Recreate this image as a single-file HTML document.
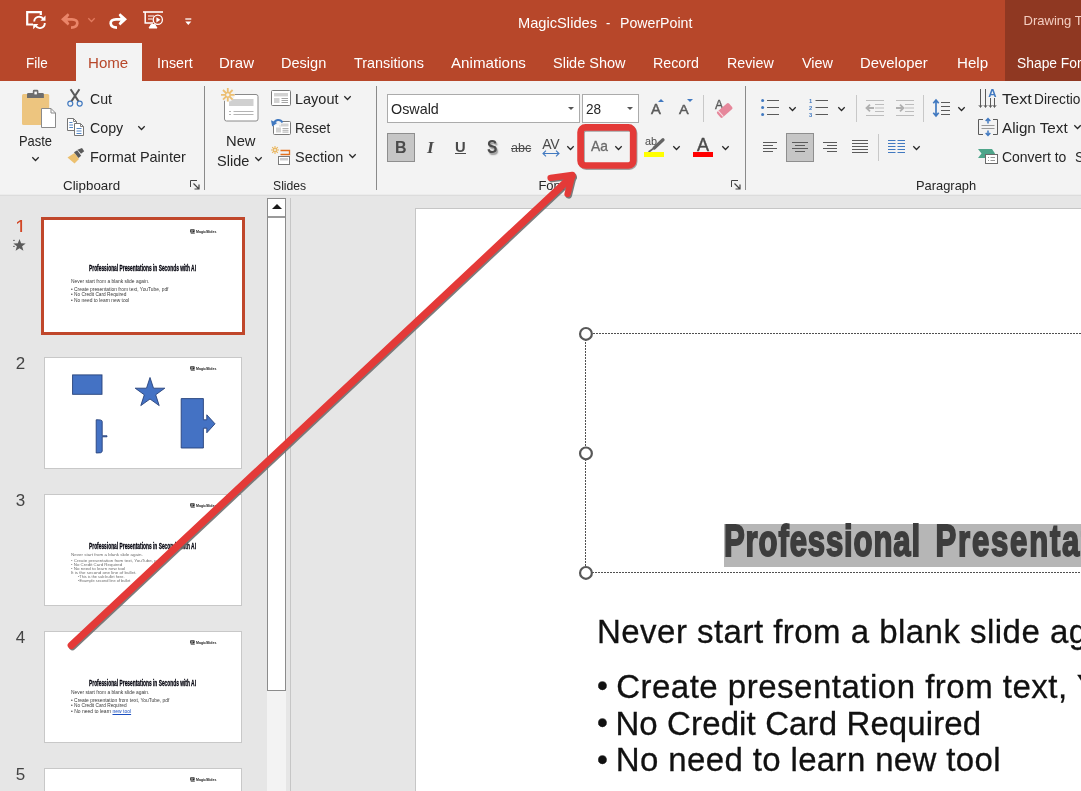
<!DOCTYPE html>
<html>
<head>
<meta charset="utf-8">
<title>MagicSlides - PowerPoint</title>
<style>
html,body{margin:0;padding:0;}
body{width:1081px;height:791px;overflow:hidden;position:relative;background:#e6e6e6;font-family:"Liberation Sans",sans-serif;color:#262626;}
#root{position:absolute;left:0;top:0;width:1081px;height:791px;overflow:hidden;will-change:transform;}
.abs{position:absolute;}
.t{position:absolute;white-space:nowrap;line-height:1;}
#titlebar{left:0;top:0;width:1081px;height:81px;background:#b7472a;}
#ctx{left:1005px;top:0;width:76px;height:81px;background:#8f3822;}
#hometab{left:76px;top:43px;width:66px;height:38px;background:#f3f3f3;}
#ribbon{left:0;top:81px;width:1081px;height:113px;background:#f3f3f3;}
#ribbonline{left:0;top:194px;width:1081px;height:2px;background:linear-gradient(#ececec 0,#ececec 50%,#dcdcdc 50%,#dcdcdc 100%);}
.tab{color:#fff;font-size:15px;top:55px;}
.rt{font-size:15px;color:#262626;}
.gl{font-size:13px;color:#262626;top:178px;}
.sep{position:absolute;top:86px;width:1px;height:104px;background:#8a8a8a;}
.ssep{position:absolute;width:1px;background:#c8c8c8;}
svg{position:absolute;overflow:visible;}

.thumb{position:absolute;left:44px;width:196px;height:110px;background:#fff;border:1px solid #c8c8c8;overflow:hidden;}
.num{position:absolute;font-size:18px;color:#444;line-height:1;left:15px;}
.bl{font-size:31px;position:relative;top:-1.6px;margin-right:-1.9px;}
.mb{-webkit-text-stroke:0.3px #111;}
.tt{position:absolute;white-space:nowrap;line-height:1;transform-origin:0 0;color:#1a1a2a;}
</style>
</head>
<body>
<div id="root">
<div id="titlebar" class="abs"></div><div id="ctx" class="abs"></div><div id="hometab" class="abs"></div>
<div class="t " style="left:517.5px;top:15.0px;font-size:15px;transform-origin:0 0;transform:scaleX(0.9771);color:#fff;">MagicSlides</div>
<div class="t " style="left:606.4px;top:15.0px;font-size:15px;transform-origin:0 0;transform:scaleX(0.8557);color:#fff;">-</div>
<div class="t " style="left:619.5px;top:15.0px;font-size:15px;transform-origin:0 0;transform:scaleX(0.9436);color:#fff;">PowerPoint</div>
<div class="t " style="left:1023.6px;top:14.09px;font-size:13px;color:#f3cdc0;">Drawing Tools</div>
<div class="t tab" style="left:25.6px;top:54.8px;transform-origin:0 0;transform:scaleX(0.8986);">File</div>
<div class="t tab" style="left:156.5px;top:54.8px;transform-origin:0 0;transform:scaleX(0.9493);">Insert</div>
<div class="t tab" style="left:219.1px;top:54.8px;transform-origin:0 0;transform:scaleX(0.9993);">Draw</div>
<div class="t tab" style="left:281.4px;top:54.8px;transform-origin:0 0;transform:scaleX(0.9695);">Design</div>
<div class="t tab" style="left:354.0px;top:54.8px;transform-origin:0 0;transform:scaleX(0.9598);">Transitions</div>
<div class="t tab" style="left:450.9px;top:54.8px;transform-origin:0 0;transform:scaleX(1.0098);">Animations</div>
<div class="t tab" style="left:553.1px;top:54.8px;transform-origin:0 0;transform:scaleX(0.967);">Slide Show</div>
<div class="t tab" style="left:653.3px;top:54.8px;transform-origin:0 0;transform:scaleX(0.9509);">Record</div>
<div class="t tab" style="left:727.2px;top:54.8px;transform-origin:0 0;transform:scaleX(0.9492);">Review</div>
<div class="t tab" style="left:801.5px;top:54.8px;transform-origin:0 0;transform:scaleX(0.9612);">View</div>
<div class="t tab" style="left:860.4px;top:54.8px;transform-origin:0 0;transform:scaleX(0.9883);">Developer</div>
<div class="t tab" style="left:956.5px;top:54.8px;transform-origin:0 0;transform:scaleX(1.0057);">Help</div>
<div class="t tab" style="left:1017.4px;top:54.8px;transform-origin:0 0;transform:scaleX(0.9227);">Shape Format</div>
<div class="t tab" style="left:88.2px;top:54.8px;transform-origin:0 0;transform:scaleX(1.0062);color:#b7472a;">Home</div>
<svg style="left:26px;top:11px" width="20" height="19" viewBox="0 0 20 19">
<path d="M7,13.5 H1.2 V1.2 H14.8 V4" fill="none" stroke="#fff" stroke-width="2.2"/>
<path d="M8.2,10.5 A5,5 0 0 1 17.5,8.2" fill="none" stroke="#fff" stroke-width="1.9"/>
<path d="M18.8,12 A5,5 0 0 1 9.5,14.6" fill="none" stroke="#fff" stroke-width="1.9"/>
<polygon points="19.5,4.5 19.5,9.8 14.4,9.8" fill="#fff"/>
<polygon points="7.2,18.3 7.2,13 12.4,13" fill="#fff"/>
</svg>
<svg style="left:61px;top:13px" width="18" height="15" viewBox="0 0 18 15">
<path d="M3.2,6.3 H11 C18.5,6.3 18,14.5 10,14.6" fill="none" stroke="#ea8569" stroke-width="2.7" stroke-linejoin="round"/>
<polygon points="0,6.3 6.8,0.2 8.4,2 5.6,6.3 8.4,10.6 6.8,12.4" fill="#ea8569"/>
</svg>
<svg style="left:88px;top:18px" width="7" height="4" viewBox="0 0 7 4"><polyline points="0.3,0.3 3.5,3.5 6.7,0.3" fill="none" stroke="#e27a5e" stroke-width="1.3"/></svg>
<svg style="left:109px;top:13px" width="18" height="15" viewBox="0 0 18 15">
<path d="M14.8,6.3 H7 C-0.5,6.3 0,14.5 8,14.6" fill="none" stroke="#fff" stroke-width="2.7" stroke-linejoin="round"/>
<polygon points="18,6.3 11.2,0.2 9.6,2 12.4,6.3 9.6,10.6 11.2,12.4" fill="#fff"/>
</svg>
<svg style="left:143px;top:11px" width="20" height="18" viewBox="0 0 20 18">
<path d="M0,1 H20" stroke="#fff" stroke-width="1.6"/>
<path d="M2.2,1 V12 H10" fill="none" stroke="#fff" stroke-width="1.5"/>
<path d="M5,5 H11 M5,8 H9.5" stroke="#fff" stroke-width="1.2"/>
<circle cx="14.8" cy="8.8" r="4.6" fill="#b7472a" stroke="#fff" stroke-width="1.3"/>
<polygon points="13.4,6.2 13.4,11.4 17.4,8.8" fill="#fff"/>
<path d="M8.5,13 L6,17 H14 L11.5,13" fill="#fff" stroke="#fff" stroke-width="1"/>
</svg>
<svg style="left:185px;top:18px" width="7" height="8" viewBox="0 0 7 8"><path d="M0.3,1 H6.3" stroke="#fff" stroke-width="1.3"/><polygon points="0.3,3.6 6.3,3.6 3.3,7" fill="#fff"/></svg>
<div id="ribbon" class="abs"></div><div id="ribbonline" class="abs"></div>
<div class="sep" style="left:204px"></div>
<div class="sep" style="left:376px"></div>
<div class="sep" style="left:745px"></div>
<div class="ssep" style="left:703px;top:95px;height:27px"></div>
<div class="ssep" style="left:856px;top:95px;height:27px"></div>
<div class="ssep" style="left:923px;top:95px;height:27px"></div>
<div class="ssep" style="left:878px;top:134px;height:27px"></div>
<svg style="left:22px;top:89px" width="35" height="39" viewBox="0 0 35 39">
<rect x="0" y="5" width="27.2" height="31" rx="1.5" fill="#edc57f"/>
<path d="M5,9 V5.2 Q5,3.9 6.3,3.9 H10.8 V2.2 Q10.8,0.8 12.2,0.8 H15 Q16.4,0.8 16.4,2.2 V3.9 H20.6 Q21.9,3.9 21.9,5.2 V9 Z" fill="#6e6e6e"/>
<rect x="12.4" y="2.6" width="2.5" height="2.8" fill="#fafafa"/>
<path d="M19.5,19.5 H29 L33.5,24 V38.5 H19.5 Z" fill="#fff" stroke="#8a8a8a" stroke-width="1"/>
<path d="M29,19.5 V24 H33.5" fill="none" stroke="#8a8a8a" stroke-width="1"/>
</svg>
<div class="t rt" style="left:19.4px;top:132.9px;transform-origin:0 0;transform:scaleX(0.8611);">Paste</div>
<svg style="left:32px;top:157px" width="7" height="4" viewBox="0 0 7 4"><polyline points="0.3,0.3 3.5,3.5 6.7,0.3" fill="none" stroke="#262626" stroke-width="1.25"/></svg>
<svg style="left:67px;top:89px" width="16" height="18" viewBox="0 0 16 18">
<path d="M3.6,0.3 L11.6,12.4 M12.4,0.3 L4.4,12.4" stroke="#595959" stroke-width="2" fill="none"/>
<circle cx="3.3" cy="14.6" r="2.5" fill="none" stroke="#4179c0" stroke-width="1.2"/>
<circle cx="12.7" cy="14.6" r="2.5" fill="none" stroke="#4179c0" stroke-width="1.2"/>
</svg>
<div class="t rt" style="left:89.9px;top:91.0px;transform-origin:0 0;transform:scaleX(0.9432);">Cut</div>
<svg style="left:67px;top:118px" width="17" height="18" viewBox="0 0 17 18">
<path d="M0.5,0.5 H6.5 L9.5,3.5 V12.5 H0.5 Z" fill="#fff" stroke="#757575" stroke-width="1"/>
<path d="M6.5,0.5 V3.5 H9.5" fill="none" stroke="#757575" stroke-width="0.9"/>
<path d="M2.3,4.5 H5.5 M2.3,7 H6 M2.3,9.5 H6" stroke="#4179c0" stroke-width="0.9"/>
<path d="M7.5,5.5 H13.5 L16.5,8.5 V17.5 H7.5 Z" fill="#fff" stroke="#757575" stroke-width="1"/>
<path d="M13.5,5.5 V8.5 H16.5" fill="none" stroke="#757575" stroke-width="0.9"/>
<path d="M9.5,10.5 H14.5 M9.5,13 H14.5 M9.5,15.5 H14.5" stroke="#4179c0" stroke-width="0.9"/>
</svg>
<div class="t rt" style="left:90.3px;top:120.1px;transform-origin:0 0;transform:scaleX(0.9479);">Copy</div>
<svg style="left:138px;top:126px" width="7" height="4" viewBox="0 0 7 4"><polyline points="0.3,0.3 3.5,3.5 6.7,0.3" fill="none" stroke="#262626" stroke-width="1.25"/></svg>
<svg style="left:67px;top:148px" width="18" height="16" viewBox="0 0 18 16">
<polygon points="0.5,9.5 7.5,5 12,11 7.5,15.5" fill="#ecc06f"/>
<polygon points="7,4.2 10.2,2.2 14.2,7.8 11.5,10" fill="#5a5a5a"/>
<polygon points="10.5,1.8 15,0 17.2,3.2 14,5.8" fill="#5a5a5a"/>
</svg>
<div class="t rt" style="left:89.9px;top:148.9px;transform-origin:0 0;transform:scaleX(0.9655);">Format Painter</div>
<div class="t gl" style="left:63.3px;top:178.69px;transform-origin:0 0;transform:scaleX(1.0262);">Clipboard</div>
<svg style="left:190px;top:180px" width="10" height="10" viewBox="0 0 10 10"><path d="M0.5,7 V0.5 H7" fill="none" stroke="#444" stroke-width="1"/><path d="M3.5,3.5 L9,9 M9,4.5 V9 H4.5" fill="none" stroke="#444" stroke-width="1.2"/></svg>
<svg style="left:221px;top:88px" width="38" height="34" viewBox="0 0 38 34">
<rect x="3.5" y="6.5" width="33.5" height="26.5" rx="2" fill="#fff" stroke="#8a8a8a" stroke-width="1"/>
<rect x="8" y="11" width="24.5" height="7" fill="#d0d0d0"/>
<path d="M8,23.5 H10 M12.5,23.5 H32.5 M8,26.5 H10 M12.5,26.5 H32.5" stroke="#b4b4b4" stroke-width="1"/>
<circle cx="6.8" cy="6.8" r="7" fill="#f3f3f3"/>
<path d="M6.8,0 V13.6 M0,6.8 H13.6 M2,2 L11.6,11.6 M11.6,2 L2,11.6" stroke="#ecbf72" stroke-width="1.8"/>
<circle cx="6.8" cy="6.8" r="2.3" fill="#f3f3f3" stroke="#ecbf72" stroke-width="1.3"/>
</svg>
<div class="t rt" style="left:226.4px;top:132.9px;transform-origin:0 0;transform:scaleX(0.9842);">New</div>
<div class="t rt" style="left:217.2px;top:152.8px;transform-origin:0 0;transform:scaleX(0.9678);">Slide</div>
<svg style="left:255px;top:157px" width="7" height="4" viewBox="0 0 7 4"><polyline points="0.3,0.3 3.5,3.5 6.7,0.3" fill="none" stroke="#262626" stroke-width="1.25"/></svg>
<svg style="left:271px;top:90px" width="20" height="16" viewBox="0 0 20 16">
<rect x="0.5" y="0.5" width="19" height="15" rx="1" fill="#fff" stroke="#7a7a7a" stroke-width="1"/>
<rect x="3" y="3" width="14" height="3.4" fill="#d2d2d2"/>
<rect x="3" y="8" width="5.5" height="5" fill="#d2d2d2"/>
<path d="M10.5,8.5 H17 M10.5,10.5 H17 M10.5,12.5 H17" stroke="#9a9a9a" stroke-width="0.9"/>
</svg>
<div class="t rt" style="left:295.4px;top:91.0px;transform-origin:0 0;transform:scaleX(0.9651);">Layout</div>
<svg style="left:344px;top:95.5px" width="7" height="4" viewBox="0 0 7 4"><polyline points="0.3,0.3 3.5,3.5 6.7,0.3" fill="none" stroke="#262626" stroke-width="1.25"/></svg>
<svg style="left:271px;top:118px" width="20" height="17" viewBox="0 0 20 17">
<rect x="2.5" y="3.5" width="17" height="13" rx="1" fill="#fff" stroke="#7a7a7a" stroke-width="1"/>
<rect x="8" y="5.5" width="9.5" height="3" fill="#d2d2d2"/>
<rect x="5" y="9.5" width="5" height="5" fill="#d2d2d2"/>
<path d="M11.5,10.5 H17.5 M11.5,12.3 H17.5 M11.5,14.1 H17.5" stroke="#9a9a9a" stroke-width="0.8"/>
<rect x="0" y="0" width="10" height="7.5" fill="#f3f3f3"/>
<path d="M3,5.8 C3.5,1.2 9.5,0.8 11.5,4.5" fill="none" stroke="#4179c0" stroke-width="1.9"/>
<polygon points="0,2.2 6.2,5 1.2,8.6" fill="#4179c0"/>
</svg>
<div class="t rt" style="left:295.4px;top:120.1px;transform-origin:0 0;transform:scaleX(0.8966);">Reset</div>
<svg style="left:271px;top:146px" width="20" height="19" viewBox="0 0 20 19">
<path d="M9.5,4.5 H18.5 V8.5 H9.5" fill="none" stroke="#e2711d" stroke-width="1.3"/>
<rect x="7.5" y="10.5" width="11" height="8" fill="#fff" stroke="#7a7a7a" stroke-width="1"/>
<rect x="9" y="12" width="8" height="2.5" fill="#cdcdcd"/>
<path d="M4,0 V8 M0,4 H8 M1.2,1.2 L6.8,6.8 M6.8,1.2 L1.2,6.8" stroke="#e9b45a" stroke-width="1.1"/>
<circle cx="4" cy="4" r="1.5" fill="#f3f3f3" stroke="#e9b45a" stroke-width="0.9"/>
</svg>
<div class="t rt" style="left:295.4px;top:148.9px;transform-origin:0 0;transform:scaleX(0.9655);">Section</div>
<svg style="left:349px;top:153.5px" width="7" height="4" viewBox="0 0 7 4"><polyline points="0.3,0.3 3.5,3.5 6.7,0.3" fill="none" stroke="#262626" stroke-width="1.25"/></svg>
<div class="t gl" style="left:273.2px;top:178.69px;transform-origin:0 0;transform:scaleX(0.9372);">Slides</div>
<div class="abs" style="left:387px;top:94px;width:191px;height:27px;background:#fff;border:1px solid #ababab;box-sizing:content-box"></div>
<div class="t rt" style="left:390.6px;top:100.7px;transform-origin:0 0;transform:scaleX(0.9555);">Oswald</div>
<svg style="left:568px;top:107px" width="6" height="3" viewBox="0 0 6 3"><polygon points="0,0 6,0 3.0,3" fill="#555"/></svg>
<div class="abs" style="left:582px;top:94px;width:55px;height:27px;background:#fff;border:1px solid #ababab;"></div>
<div class="t rt" style="left:585.6px;top:100.7px;transform-origin:0 0;transform:scaleX(0.9069);">28</div>
<svg style="left:627px;top:107px" width="6" height="3" viewBox="0 0 6 3"><polygon points="0,0 6,0 3.0,3" fill="#555"/></svg>
<div class="t " style="left:650.6px;top:101.3px;font-size:15px;transform-origin:0 0;transform:scaleX(0.9851);color:#5a5a5a;-webkit-text-stroke:0.45px #5a5a5a;">A</div>
<svg style="left:658px;top:99px" width="6" height="3" viewBox="0 0 6 3"><polygon points="0,3 6,3 3,0" fill="#4179c0"/></svg>
<div class="t " style="left:679.2px;top:103.17px;font-size:13.5px;transform-origin:0 0;transform:scaleX(1.0724);color:#5a5a5a;-webkit-text-stroke:0.45px #5a5a5a;">A</div>
<svg style="left:687px;top:99px" width="6" height="3" viewBox="0 0 6 3"><polygon points="0,0 6,0 3,3" fill="#4179c0"/></svg>
<div class="t " style="left:714.6px;top:97.77px;font-size:13.5px;transform-origin:0 0;transform:scaleX(0.9066);color:#5a5a5a;-webkit-text-stroke:0.35px #5a5a5a;">A</div>
<svg style="left:0px;top:0px" width="1081" height="200" viewBox="0 0 1081 200"><g transform="translate(724.7,110.4) rotate(-41)"><rect x="-7.8" y="-3.9" width="15.6" height="7.8" rx="1.6" fill="#e6879b"/><rect x="-5.6" y="-3.9" width="1" height="7.8" fill="#f6dfe4"/></g></svg>
<div class="abs" style="left:387px;top:133px;width:26px;height:27px;background:#c6c6c6;border:1px solid #8e8e8e;"></div>
<div class="t " style="left:395px;top:140px;font-size:16px;font-weight:bold;color:#4a4a4a;">B</div>
<div class="t " style="left:427px;top:138.6px;font-family:'Liberation Serif',serif;font-style:italic;font-weight:bold;font-size:17.5px;color:#4a4a4a;">I</div>
<div class="t " style="left:455.2px;top:139.3px;font-size:15px;font-weight:bold;transform-origin:0 0;transform:scaleX(0.9815);color:#4a4a4a;">U</div>
<div class="abs" style="left:455px;top:153.2px;width:11px;height:1.3px;background:#4a4a4a;"></div>
<div class="t " style="left:486.6px;top:138px;font-size:18px;font-weight:bold;color:#4a4a4a;text-shadow:1.5px 1.5px 1.5px #999;transform-origin:0 0;transform:scaleX(0.86);">S</div>
<div class="t " style="left:511px;top:142px;font-size:12.5px;color:#4a4a4a;text-decoration:line-through;">abc</div>
<div class="t " style="left:542.3px;top:136.8px;font-size:14px;color:#4a4a4a;letter-spacing:-0.4px;">AV</div>
<svg style="left:542px;top:150px" width="18" height="7" viewBox="0 0 18 7"><path d="M1,3.5 H17 M4,0.7 L1,3.5 L4,6.3 M14,0.7 L17,3.5 L14,6.3" fill="none" stroke="#4179c0" stroke-width="1.1"/></svg>
<svg style="left:567px;top:145.5px" width="7" height="4" viewBox="0 0 7 4"><polyline points="0.3,0.3 3.5,3.5 6.7,0.3" fill="none" stroke="#262626" stroke-width="1.25"/></svg>
<div class="t " style="left:590.6px;top:139.42px;font-size:14.5px;transform-origin:0 0;transform:scaleX(0.9514);color:#6a6a6a;-webkit-text-stroke:0.3px #6a6a6a;">Aa</div>
<svg style="left:615px;top:145.5px" width="7" height="4" viewBox="0 0 7 4"><polyline points="0.3,0.3 3.5,3.5 6.7,0.3" fill="none" stroke="#262626" stroke-width="1.25"/></svg>
<div class="t " style="left:644.5px;top:135.86px;font-size:10.8px;transform-origin:0 0;transform:scaleX(1.0093);color:#4a4a4a;">ab</div>
<svg style="left:0px;top:0px" width="1081" height="200" viewBox="0 0 1081 200"><path d="M663,139.8 L654.2,148" stroke="#646464" stroke-width="3.3" stroke-linecap="round" fill="none"/><path d="M654.6,147.6 L648.6,152" stroke="#646464" stroke-width="1.7" fill="none"/></svg>
<div class="abs" style="left:644px;top:152px;width:20px;height:5px;background:#ffff00;"></div>
<svg style="left:673px;top:145.5px" width="7" height="4" viewBox="0 0 7 4"><polyline points="0.3,0.3 3.5,3.5 6.7,0.3" fill="none" stroke="#262626" stroke-width="1.25"/></svg>
<div class="t " style="left:696.8px;top:136.58px;font-size:17.5px;transform-origin:0 0;transform:scaleX(1.032);color:#4a4a4a;-webkit-text-stroke:0.4px #4a4a4a;">A</div>
<div class="abs" style="left:693px;top:152px;width:20px;height:5px;background:#ff0000;"></div>
<svg style="left:722px;top:145.5px" width="7" height="4" viewBox="0 0 7 4"><polyline points="0.3,0.3 3.5,3.5 6.7,0.3" fill="none" stroke="#262626" stroke-width="1.25"/></svg>
<div class="t gl" style="left:538.4px;top:178.69px;">Font</div>
<svg style="left:731px;top:180px" width="10" height="10" viewBox="0 0 10 10"><path d="M0.5,7 V0.5 H7" fill="none" stroke="#444" stroke-width="1"/><path d="M3.5,3.5 L9,9 M9,4.5 V9 H4.5" fill="none" stroke="#444" stroke-width="1.2"/></svg>
<svg style="left:761px;top:99px" width="18" height="18" viewBox="0 0 18 18">
<circle cx="1.6" cy="1.5" r="1.5" fill="#4179c0"/><circle cx="1.6" cy="8.5" r="1.5" fill="#4179c0"/><circle cx="1.6" cy="15.5" r="1.5" fill="#4179c0"/>
<path d="M6,1.5 H18 M6,8.5 H18 M6,15.5 H18" stroke="#5a5a5a" stroke-width="1"/></svg>
<svg style="left:789px;top:106.5px" width="7" height="4" viewBox="0 0 7 4"><polyline points="0.3,0.3 3.5,3.5 6.7,0.3" fill="none" stroke="#262626" stroke-width="1.25"/></svg>
<svg style="left:809px;top:98px" width="19" height="19" viewBox="0 0 19 19">
<text x="0" y="5.2" font-size="5.8" font-weight="bold" fill="#4179c0" font-family="Liberation Sans, sans-serif">1</text>
<text x="0" y="12.2" font-size="5.8" font-weight="bold" fill="#4179c0" font-family="Liberation Sans, sans-serif">2</text>
<text x="0" y="19.2" font-size="5.8" font-weight="bold" fill="#4179c0" font-family="Liberation Sans, sans-serif">3</text>
<path d="M6.5,2.5 H19 M6.5,9.5 H19 M6.5,16.5 H19" stroke="#5a5a5a" stroke-width="1"/></svg>
<svg style="left:838px;top:106.5px" width="7" height="4" viewBox="0 0 7 4"><polyline points="0.3,0.3 3.5,3.5 6.7,0.3" fill="none" stroke="#262626" stroke-width="1.25"/></svg>
<svg style="left:866px;top:99px" width="18" height="17" viewBox="0 0 18 17">
<path d="M0,1.5 H18 M9,5.5 H18 M9,9 H18 M9,12.5 H18 M0,16.5 H18" stroke="#bdbdbd" stroke-width="1"/>
<path d="M0.5,9 H8 M4,5.6 L0.5,9 L4,12.4" fill="none" stroke="#b0b0b0" stroke-width="1.8"/></svg>
<svg style="left:896px;top:99px" width="18" height="17" viewBox="0 0 18 17">
<path d="M0,1.5 H18 M9,5.5 H18 M9,9 H18 M9,12.5 H18 M0,16.5 H18" stroke="#bdbdbd" stroke-width="1"/>
<path d="M0,9 H7.5 M4,5.6 L7.5,9 L4,12.4" fill="none" stroke="#b0b0b0" stroke-width="1.8"/></svg>
<svg style="left:933px;top:99px" width="17" height="18" viewBox="0 0 17 18">
<path d="M3,1.5 V16.5 M0.3,4.2 L3,1 L5.7,4.2 M0.3,13.8 L3,17 L5.7,13.8" fill="none" stroke="#4179c0" stroke-width="1.7"/>
<path d="M8,3.5 H17 M8,7.5 H17 M8,11.5 H17 M8,15.5 H17" stroke="#5a5a5a" stroke-width="1"/></svg>
<svg style="left:958px;top:106.5px" width="7" height="4" viewBox="0 0 7 4"><polyline points="0.3,0.3 3.5,3.5 6.7,0.3" fill="none" stroke="#262626" stroke-width="1.25"/></svg>
<svg style="left:763px;top:142px" width="14" height="10" viewBox="0 0 14 10"><path d="M0,0.5 H14 M0,3.5 H10 M0,6.5 H14 M0,9.5 H10" stroke="#5a5a5a" stroke-width="1"/></svg>
<div class="abs" style="left:786px;top:133px;width:26px;height:27px;background:#c6c6c6;border:1px solid #8e8e8e;"></div>
<svg style="left:792px;top:142px" width="16" height="10" viewBox="0 0 16 10"><path d="M0,0.5 H16 M3,3.5 H13 M0,6.5 H16 M3,9.5 H13" stroke="#5a5a5a" stroke-width="1"/></svg>
<svg style="left:823px;top:142px" width="14" height="10" viewBox="0 0 14 10"><path d="M0,0.5 H14 M4,3.5 H14 M0,6.5 H14 M4,9.5 H14" stroke="#5a5a5a" stroke-width="1"/></svg>
<svg style="left:852px;top:140px" width="16" height="14" viewBox="0 0 16 14"><path d="M0,0.5 H16 M0,3.5 H16 M0,6.5 H16 M0,9.5 H16 M0,12.5 H16" stroke="#5a5a5a" stroke-width="1"/></svg>
<svg style="left:888px;top:140px" width="17" height="14" viewBox="0 0 17 14"><path d="M0,0.5 H7.5 M0,3.5 H7.5 M0,6.5 H7.5 M0,9.5 H7.5 M0,12.5 H7.5 M9.5,0.5 H17 M9.5,3.5 H17 M9.5,6.5 H17 M9.5,9.5 H17 M9.5,12.5 H17" stroke="#4179c0" stroke-width="1"/></svg>
<svg style="left:913px;top:145.5px" width="7" height="4" viewBox="0 0 7 4"><polyline points="0.3,0.3 3.5,3.5 6.7,0.3" fill="none" stroke="#262626" stroke-width="1.25"/></svg>
<div class="t gl" style="left:915.6px;top:178.69px;transform-origin:0 0;transform:scaleX(0.99);">Paragraph</div>
<svg style="left:979px;top:88px" width="19" height="21" viewBox="0 0 19 21">
<path d="M1.5,1 V19 M6.5,1 V19 M11.5,10 V19 M15.5,10 V19" stroke="#5a5a5a" stroke-width="1"/>
<path d="M-0.2,17 L1.5,19.5 L3.2,17 M4.8,17 L6.5,19.5 L8.2,17 M9.8,17 L11.5,19.5 L13.2,17 M13.8,17 L15.5,19.5 L17.2,17" fill="none" stroke="#5a5a5a" stroke-width="0.9"/>
<text x="9.3" y="8.5" font-size="11.5" font-weight="bold" fill="#4179c0" font-family="Liberation Sans, sans-serif">A</text></svg>
<div class="t rt" style="left:1001.9px;top:90.8px;transform-origin:0 0;transform:scaleX(1.0863);">Text</div>
<div class="t rt" style="left:1034.4px;top:90.8px;transform-origin:0 0;transform:scaleX(0.9124);">Direction</div>
<svg style="left:978px;top:118px" width="20" height="18" viewBox="0 0 20 18">
<path d="M5,1.5 H0.5 V16.5 H5 M15,1.5 H19.5 V16.5 H15" fill="none" stroke="#5a5a5a" stroke-width="1"/>
<path d="M3.5,7.5 H16.5 M3.5,10.5 H16.5" stroke="#9a9a9a" stroke-width="1"/>
<path d="M10,0.8 V5.5 M7.7,3 L10,0.6 L12.3,3 M10,12.5 V17.2 M7.7,15 L10,17.4 L12.3,15" fill="none" stroke="#4179c0" stroke-width="1.5"/></svg>
<div class="t rt" style="left:1001.9px;top:120.1px;transform-origin:0 0;transform:scaleX(1.0139);">Align Text</div>
<svg style="left:1073.5px;top:124.5px" width="7" height="4" viewBox="0 0 7 4"><polyline points="0.3,0.3 3.5,3.5 6.7,0.3" fill="none" stroke="#262626" stroke-width="1.25"/></svg>
<svg style="left:978px;top:149px" width="20" height="15" viewBox="0 0 20 15">
<polygon points="0,0 14,0 17,4.5 14,9 0,9 3.5,4.5" fill="#4ea58a"/>
<rect x="7.5" y="5.5" width="12" height="9" fill="#fff" stroke="#6b6b6b" stroke-width="1"/>
<path d="M10,8.5 H11 M12.5,8.5 H17 M10,11.5 H11 M12.5,11.5 H17" stroke="#8a8a8a" stroke-width="0.9"/></svg>
<div class="t rt" style="left:1002.0px;top:148.9px;transform-origin:0 0;transform:scaleX(0.9303);">Convert to</div>
<div class="t rt" style="left:1075.2px;top:148.9px;transform-origin:0 0;transform:scaleX(0.9303);">SmartArt</div>
<div class="abs" style="left:290px;top:198px;width:1px;height:600px;background:#c6c6c6;"></div>
<div class="abs" style="left:267px;top:198px;width:17px;height:491px;background:#fff;border:1px solid #8c8c8c;"></div>
<div class="abs" style="left:268px;top:216px;width:17px;height:2px;background:#9a9a9a;"></div>
<div class="abs" style="left:267px;top:691px;width:19px;height:100px;background:#f3f3f3;"></div>
<svg style="left:272px;top:204px" width="10" height="5" viewBox="0 0 10 5"><polygon points="0,5 10,5 5,0" fill="#1a1a1a"/></svg>
<div class="abs" style="left:15px;top:216.7px;width:20px;height:15.4px;overflow:hidden;"><div class="t" style="left:0;top:0;font-size:20.8px;color:#d24726;">1</div></div>
<svg style="left:12.9px;top:239px" width="13" height="12" viewBox="0 0 13 12"><polygon points="6.5,0 8.1,4.3 12.7,4.5 9.1,7.3 10.4,11.8 6.5,9.2 2.6,11.8 3.9,7.3 0.3,4.5 4.9,4.3" fill="#5a5a5a"/><path d="M0,1.4 H1.9 M0,7.4 H1.9" stroke="#555" stroke-width="0.8"/></svg>
<div class="t " style="left:15.8px;top:354.81px;font-size:17px;color:#444;">2</div>
<div class="t " style="left:15.8px;top:491.81px;font-size:17px;color:#444;">3</div>
<div class="t " style="left:15.8px;top:628.81px;font-size:17px;color:#444;">4</div>
<div class="t " style="left:15.8px;top:765.81px;font-size:17px;color:#444;">5</div>
<div class="abs" style="left:41px;top:217px;width:198px;height:112px;border:3px solid #c0472b;background:#fff;"></div>
<svg style="left:189.7px;top:229.3px" width="5" height="5" viewBox="0 0 5 5"><rect x="0.2" y="0.2" width="4.4" height="3.4" rx="0.6" fill="#222"/><path d="M1,1.3 H3.8 M1,2.3 H3" stroke="#fff" stroke-width="0.5"/><path d="M0.8,4.3 H4.8" stroke="#222" stroke-width="0.7"/></svg>
<div class="t " style="left:196.0px;top:229.9px;font-size:3.9px;font-weight:bold;transform-origin:0 0;transform:scaleX(0.905);color:#222;">MagicSlides</div>
<div class="t " style="left:89.4px;top:263.99px;font-size:8.4px;font-weight:bold;transform-origin:0 0;transform:scaleX(0.58);color:#05050f;-webkit-text-stroke:0.3px #05050f;">Professional Presentations in Seconds with AI</div>
<div class="t " style="left:71.1px;top:280.07px;font-size:4.76px;transform-origin:0 0;transform:scaleX(1.0288);color:#3a3a3a;">Never start from a blank slide again.</div>
<div class="t " style="left:71.1px;top:287.77px;font-size:4.76px;transform-origin:0 0;transform:scaleX(1.0265);color:#3a3a3a;">• Create presentation from text, YouTube, pdf</div>
<div class="t " style="left:71.1px;top:292.97px;font-size:4.76px;transform-origin:0 0;transform:scaleX(1.0021);color:#3a3a3a;">• No Credit Card Required</div>
<div class="t " style="left:71.1px;top:298.57px;font-size:4.76px;transform-origin:0 0;transform:scaleX(1.022);color:#3a3a3a;">• No need to learn new tool</div>
<div class="thumb" style="top:357px;"><svg style="left:0;top:0" width="197" height="110" viewBox="0 0 197 110"><g fill="#4472c4" stroke="#27427a" stroke-width="0.9" stroke-linejoin="miter"><rect x="27.6" y="16.9" width="29.4" height="19.4"/><polygon points="105,19.5 108.5,30.2 119.8,30.2 110.7,36.8 114.2,47.6 105,41 95.8,47.6 99.3,36.8 90.2,30.2 101.5,30.2"/><path d="M136.2,40.6 H158.4 V61.8 H161.8 V56.8 L170,65.8 L161.8,74.8 V70.2 H158.4 V90 H136.2 Z"/><path d="M51.2,61.8 Q57.2,61.5 57.2,63.5 V77.8 H62 V78.8 H57.2 V93.5 Q57.2,95.2 51.2,95 Z"/></g></svg></div>
<svg style="left:189.7px;top:366.2px" width="5" height="5" viewBox="0 0 5 5"><rect x="0.2" y="0.2" width="4.4" height="3.4" rx="0.6" fill="#222"/><path d="M1,1.3 H3.8 M1,2.3 H3" stroke="#fff" stroke-width="0.5"/><path d="M0.8,4.3 H4.8" stroke="#222" stroke-width="0.7"/></svg>
<div class="t " style="left:196.0px;top:366.8px;font-size:3.9px;font-weight:bold;transform-origin:0 0;transform:scaleX(0.905);color:#222;">MagicSlides</div>
<div class="thumb" style="top:494px;"></div>
<svg style="left:189.7px;top:503.3px" width="5" height="5" viewBox="0 0 5 5"><rect x="0.2" y="0.2" width="4.4" height="3.4" rx="0.6" fill="#222"/><path d="M1,1.3 H3.8 M1,2.3 H3" stroke="#fff" stroke-width="0.5"/><path d="M0.8,4.3 H4.8" stroke="#222" stroke-width="0.7"/></svg>
<div class="t " style="left:196.0px;top:503.9px;font-size:3.9px;font-weight:bold;transform-origin:0 0;transform:scaleX(0.905);color:#222;">MagicSlides</div>
<div class="t " style="left:89.4px;top:542.39px;font-size:8.4px;font-weight:bold;transform-origin:0 0;transform:scaleX(0.58);color:#05050f;-webkit-text-stroke:0.3px #05050f;">Professional Presentations in Seconds with AI</div>
<div class="t " style="left:70.7px;top:553.36px;font-size:4.3px;transform-origin:0 0;transform:scaleX(1.0444);color:#6c6c6c;">Never start from a blank slide again.</div>
<div class="t " style="left:70.7px;top:559.16px;font-size:4.3px;transform-origin:0 0;transform:scaleX(1.0421);color:#6c6c6c;">• Create presentation from text, YouTube, pdf</div>
<div class="t " style="left:70.7px;top:563.06px;font-size:4.3px;transform-origin:0 0;transform:scaleX(1.0254);color:#6c6c6c;">• No Credit Card Required</div>
<div class="t " style="left:70.7px;top:566.96px;font-size:4.3px;transform-origin:0 0;transform:scaleX(1.0482);color:#6c6c6c;">• No need to learn new tool</div>
<div class="t " style="left:70.7px;top:571.26px;font-size:4.3px;transform-origin:0 0;transform:scaleX(1.0458);color:#6c6c6c;">It is the second one line of bullet.</div>
<div class="t " style="left:78.3px;top:574.8px;font-size:3.9px;transform-origin:0 0;transform:scaleX(0.9937);color:#6c6c6c;">•This is the sub bullet here.</div>
<div class="t " style="left:78.3px;top:578.5px;font-size:3.9px;transform-origin:0 0;transform:scaleX(1.0095);color:#6c6c6c;">•Example second line of bullet</div>
<div class="thumb" style="top:631px;"></div>
<svg style="left:189.7px;top:640.3px" width="5" height="5" viewBox="0 0 5 5"><rect x="0.2" y="0.2" width="4.4" height="3.4" rx="0.6" fill="#222"/><path d="M1,1.3 H3.8 M1,2.3 H3" stroke="#fff" stroke-width="0.5"/><path d="M0.8,4.3 H4.8" stroke="#222" stroke-width="0.7"/></svg>
<div class="t " style="left:196.0px;top:640.9px;font-size:3.9px;font-weight:bold;transform-origin:0 0;transform:scaleX(0.905);color:#222;">MagicSlides</div>
<div class="t " style="left:89.4px;top:679.49px;font-size:8.4px;font-weight:bold;transform-origin:0 0;transform:scaleX(0.58);color:#05050f;-webkit-text-stroke:0.3px #05050f;">Professional Presentations in Seconds with AI</div>
<div class="t " style="left:70.7px;top:690.57px;font-size:4.76px;transform-origin:0 0;transform:scaleX(1.0301);color:#3a3a3a;">Never start from a blank slide again.</div>
<div class="t " style="left:70.7px;top:698.67px;font-size:4.76px;transform-origin:0 0;transform:scaleX(1.0349);color:#3a3a3a;">• Create presentation from text, YouTube, pdf</div>
<div class="t " style="left:70.7px;top:703.77px;font-size:4.76px;transform-origin:0 0;transform:scaleX(1.0057);color:#3a3a3a;">• No Credit Card Required</div>
<div class="t " style="left:70.7px;top:709.57px;font-size:4.76px;transform-origin:0 0;transform:scaleX(1.0517);color:#3a3a3a;">• No need to learn <span style="color:#1a4fc0;text-decoration:underline;text-decoration-thickness:0.4px">new tool</span></div>
<div class="thumb" style="top:768px;height:40px;"></div>
<svg style="left:189.7px;top:777.3px" width="5" height="5" viewBox="0 0 5 5"><rect x="0.2" y="0.2" width="4.4" height="3.4" rx="0.6" fill="#222"/><path d="M1,1.3 H3.8 M1,2.3 H3" stroke="#fff" stroke-width="0.5"/><path d="M0.8,4.3 H4.8" stroke="#222" stroke-width="0.7"/></svg>
<div class="t " style="left:196.0px;top:777.9px;font-size:3.9px;font-weight:bold;transform-origin:0 0;transform:scaleX(0.905);color:#222;">MagicSlides</div>
<div class="abs" style="left:415px;top:208px;width:700px;height:600px;background:#fff;border:1px solid #c6c6c6;"></div>
<svg style="left:0;top:0" width="1081" height="791" viewBox="0 0 1081 791"><path d="M1081,333.5 H585.5 V572.5 H1081" fill="none" stroke="#505050" stroke-width="1" stroke-dasharray="2 1"/></svg>
<svg style="left:0;top:0" width="1081" height="791" viewBox="0 0 1081 791"><circle cx="585.95" cy="333.9" r="5.9" fill="#fff" stroke="#585858" stroke-width="2.2"/><circle cx="585.95" cy="453.4" r="5.9" fill="#fff" stroke="#585858" stroke-width="2.2"/><circle cx="585.95" cy="572.9" r="5.9" fill="#fff" stroke="#585858" stroke-width="2.2"/></svg>
<div class="abs" style="left:724px;top:524px;width:360px;height:43px;background:#b6b6b6;"></div>
<div class="t" id="mtitle" style="left:724.3px;top:520px;font-size:43.5px;font-weight:bold;color:#3d3d3d;-webkit-text-stroke:1.9px #3d3d3d;letter-spacing:1.2px;word-spacing:7px;transform-origin:0 0;transform:scaleX(0.715);">Professional <span style="letter-spacing:2.5px">Presentations</span> in Seconds with AI</div>
<div class="t mb" id="mb0" style="left:597px;top:615.4px;font-size:33px;letter-spacing:0.47px;color:#111;">Never start from a blank slide again.</div>
<div class="t mb" id="mb1" style="left:597px;top:670px;font-size:33px;letter-spacing:0.5px;color:#111;"><span class="bl">•</span> Create presentation from text, YouTube, pdf</div>
<div class="t mb" id="mb2" style="left:597px;top:706.8px;font-size:33px;letter-spacing:0.12px;color:#111;"><span class="bl">•</span> No Credit Card Required</div>
<div class="t mb" id="mb3" style="left:597px;top:743.4px;font-size:33px;letter-spacing:0.36px;color:#111;"><span class="bl">•</span> No need to learn new tool</div>
<svg style="left:0;top:0" width="1081" height="791" viewBox="0 0 1081 791"><g fill="none" stroke="#6e6e6e" stroke-linecap="round" stroke-linejoin="round" opacity="0.6" transform="translate(0.9,1.1)"><rect x="580.6" y="127.4" width="52.6" height="38.1" rx="4.8" stroke-width="6.7"/></g><g fill="none" stroke="#6e6e6e" stroke-linecap="round" stroke-linejoin="round" opacity="0.9" transform="translate(1.2,1.4)"><path d="M71.3,645.3 L572,176.3" stroke-width="7.3"/>
<path d="M550.6,177.8 L572.3,175 L567.6,194" stroke-width="6.4"/></g><g fill="none" stroke="#e43a38" stroke-linecap="round" stroke-linejoin="round"><rect x="580.6" y="127.4" width="52.6" height="38.1" rx="4.8" stroke-width="6.7"/><path d="M71.3,645.3 L572,176.3" stroke-width="7.3"/>
<path d="M550.6,177.8 L572.3,175 L567.6,194" stroke-width="6.4"/></g></svg>
</div>
</body>
</html>
